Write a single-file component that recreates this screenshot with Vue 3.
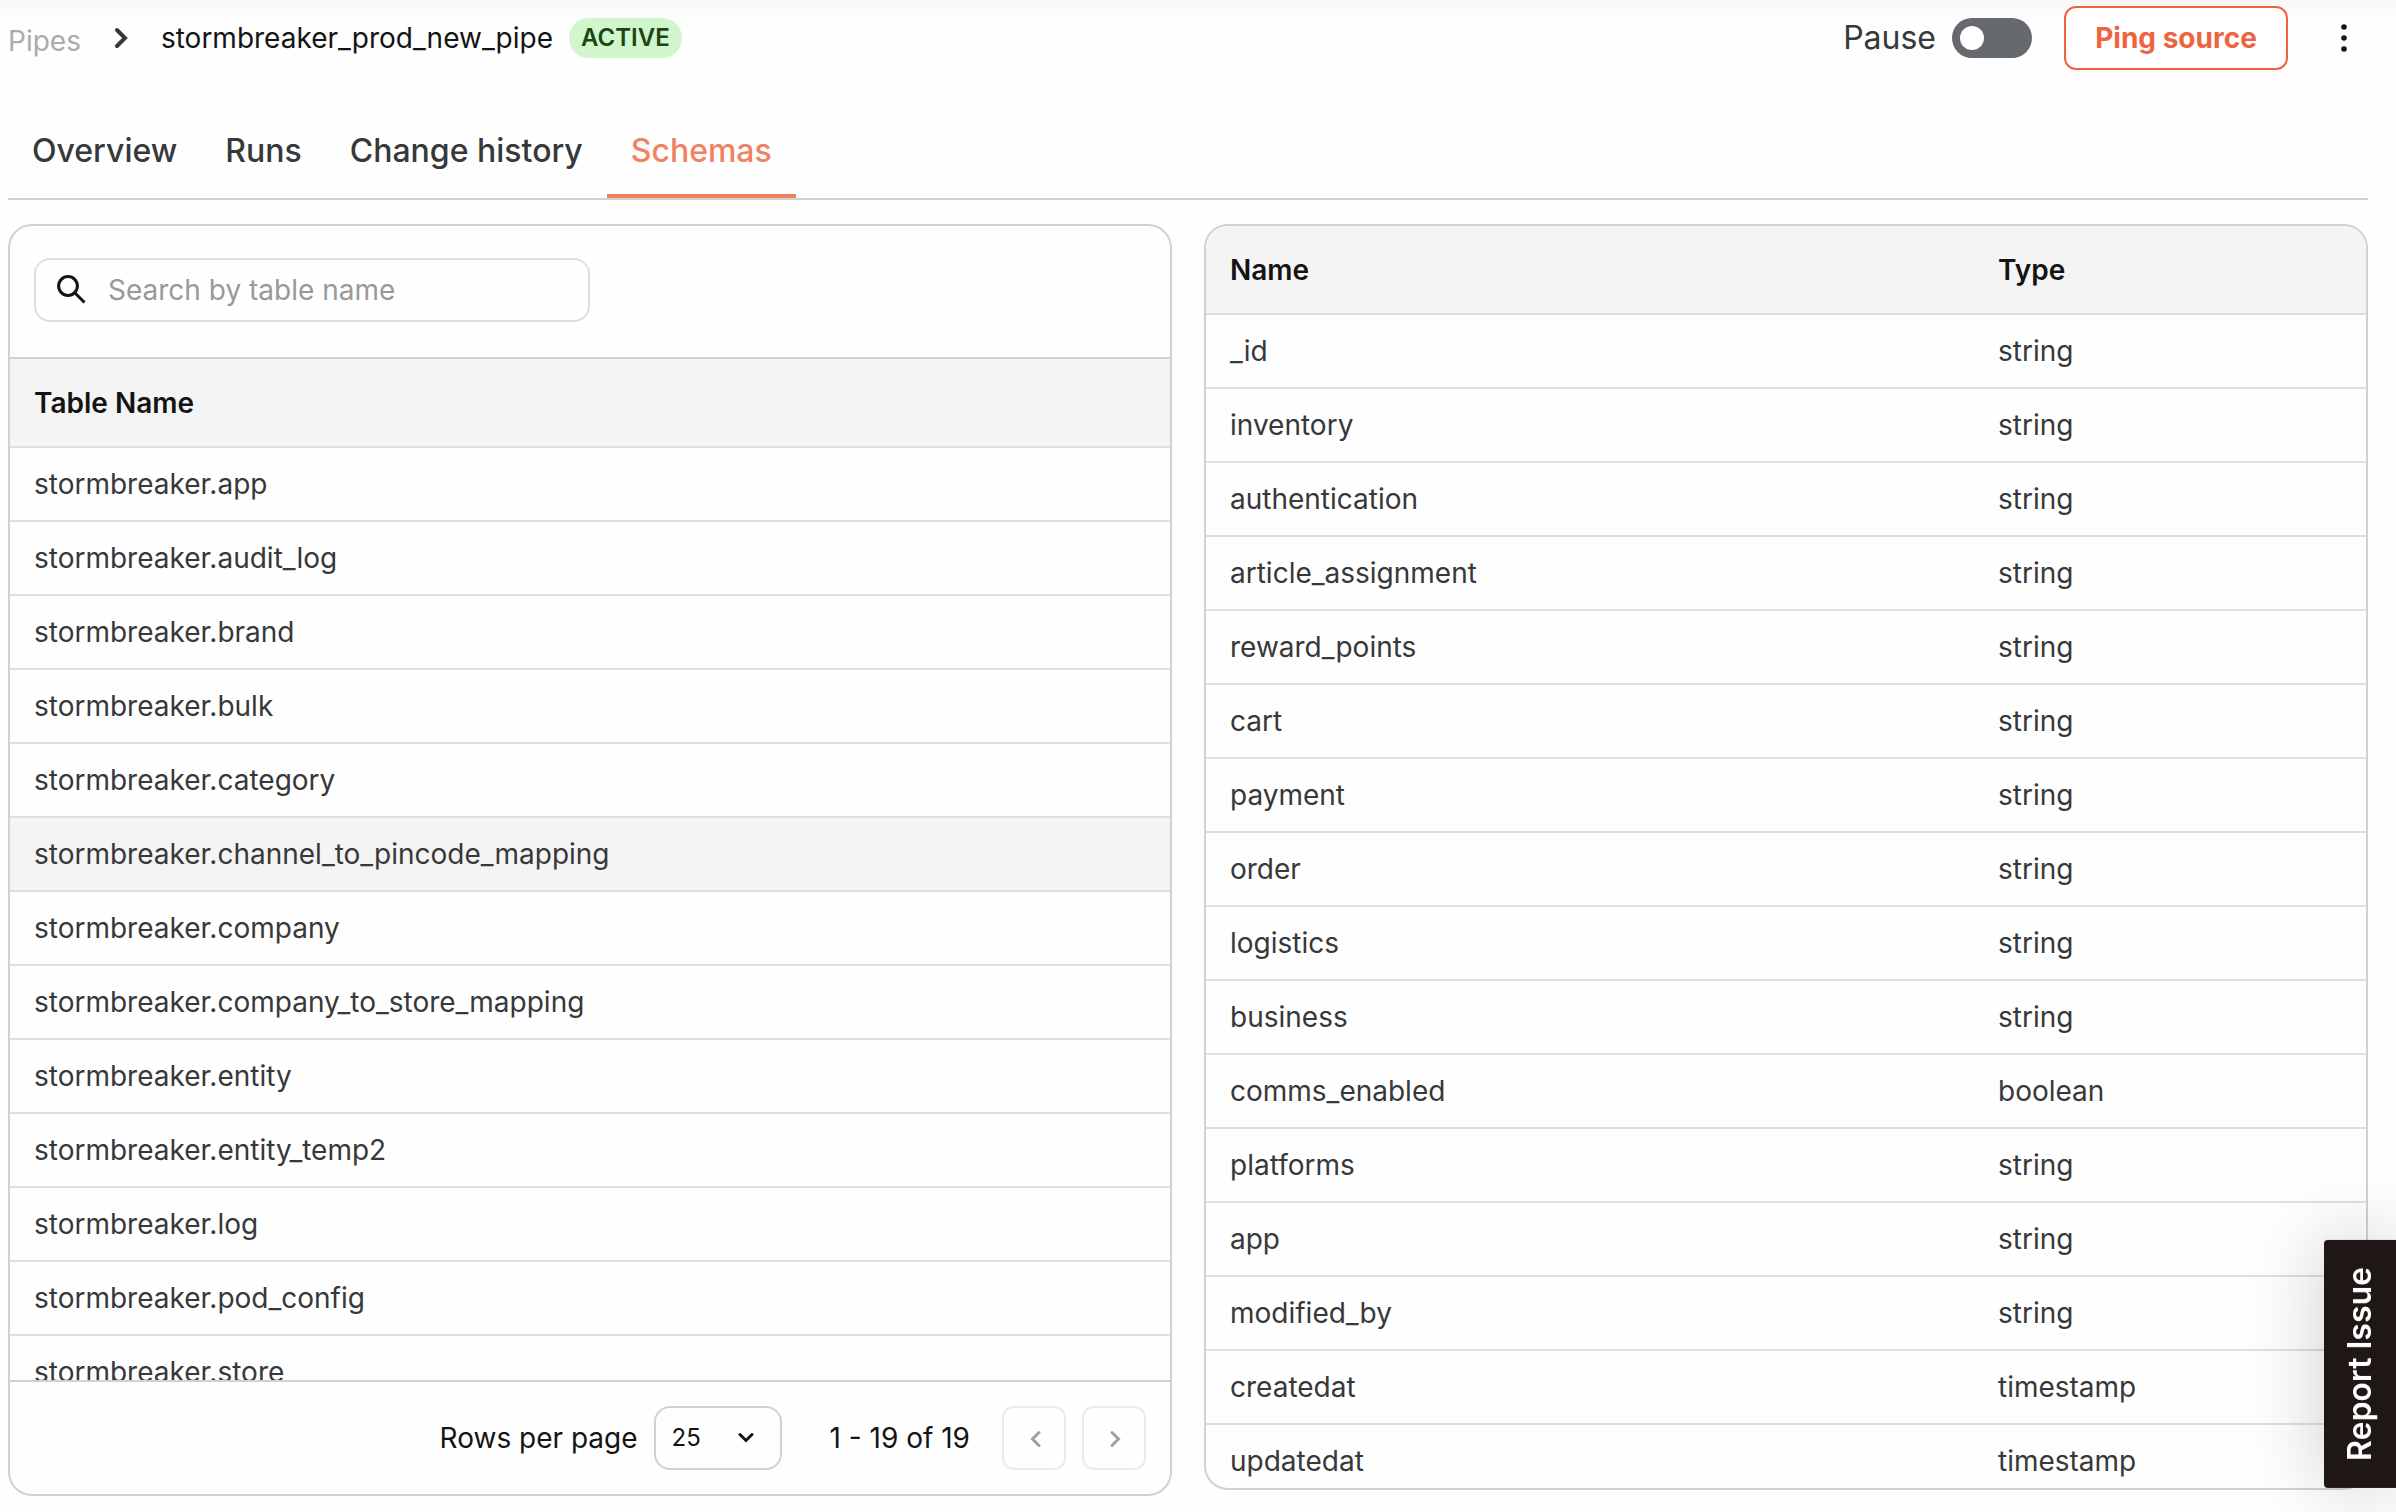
<script setup>
import { ref } from 'vue'

const tabs = ['Overview', 'Runs', 'Change history', 'Schemas']
const activeTab = ref('Schemas')
const paused = ref(false)
const search = ref('')
const pageSize = ref('25')
const selected = ref('channel_to_pincode_mapping')

const tables = [
  'app', 'audit_log', 'brand', 'bulk', 'category', 'channel_to_pincode_mapping',
  'company', 'company_to_store_mapping', 'entity', 'entity_temp2', 'log', 'pod_config', 'store',
]

const columns = [
  ['_id', 'string'],
  ['inventory', 'string'],
  ['authentication', 'string'],
  ['article_assignment', 'string'],
  ['reward_points', 'string'],
  ['cart', 'string'],
  ['payment', 'string'],
  ['order', 'string'],
  ['logistics', 'string'],
  ['business', 'string'],
  ['comms_enabled', 'boolean'],
  ['platforms', 'string'],
  ['app', 'string'],
  ['modified_by', 'string'],
  ['createdat', 'timestamp'],
  ['updatedat', 'timestamp'],
]
</script>

<template>
  <div class="page">
    <header class="topbar">
      <nav class="crumbs" aria-label="Breadcrumb">
        <a href="#" class="crumb">Pipes</a>
        <svg class="sep" viewBox="0 0 16 24" aria-hidden="true"><path d="M4 4l8 8-8 8" /></svg>
        <h1>stormbreaker_prod_new_pipe</h1>
        <span class="status">ACTIVE</span>
      </nav>
      <div class="actions">
        <label class="pause">
          <span>Pause</span>
          <input v-model="paused" type="checkbox" role="switch">
        </label>
        <button type="button" class="ping">Ping source</button>
        <button type="button" class="more" aria-label="More actions">
          <svg viewBox="0 0 8 32" aria-hidden="true">
            <circle cx="4" cy="5" r="2.8" /><circle cx="4" cy="16" r="2.8" /><circle cx="4" cy="27" r="2.8" />
          </svg>
        </button>
      </div>
    </header>

    <div class="tabs" role="tablist">
      <button
        v-for="tab in tabs"
        :key="tab"
        type="button"
        role="tab"
        class="tab"
        :class="{ active: tab === activeTab }"
        :aria-selected="tab === activeTab"
        @click="activeTab = tab"
      >{{ tab }}</button>
    </div>

    <main class="panels">
      <section class="panel tables">
        <div class="search-row">
          <label class="search">
            <svg viewBox="0 0 32 32" aria-hidden="true"><circle cx="12" cy="12" r="9.4" /><path d="M18.5 18.5l10 10" /></svg>
            <input v-model="search" type="text" placeholder="Search by table name" aria-label="Search by table name">
          </label>
        </div>
        <div class="scroll">
          <table>
            <thead>
              <tr><th scope="col">Table Name</th></tr>
            </thead>
            <tbody>
              <tr v-for="name in tables" :key="name" :class="{ selected: name === selected }" @click="selected = name">
                <td>stormbreaker.{{ name }}</td>
              </tr>
            </tbody>
          </table>
        </div>
        <footer class="pager">
          <label class="rows">
            <span>Rows per page</span>
            <span class="select">
              <select v-model="pageSize">
                <option>25</option>
                <option>50</option>
                <option>100</option>
              </select>
              <svg viewBox="0 0 16 12" aria-hidden="true"><path d="M2 2.5l6 6 6-6" /></svg>
            </span>
          </label>
          <span class="range">1 - 19 of 19</span>
          <div class="steps">
            <button type="button" disabled aria-label="Previous page">
              <svg viewBox="0 0 12 18" aria-hidden="true"><path d="M10 2.5L3.5 9l6.5 6.5" /></svg>
            </button>
            <button type="button" disabled aria-label="Next page">
              <svg viewBox="0 0 12 18" aria-hidden="true"><path d="M3 2.5L9.500 9 3 15.5" /></svg>
            </button>
          </div>
        </footer>
      </section>

      <section class="panel fields">
        <table>
          <thead>
            <tr><th scope="col">Name</th><th scope="col" class="type">Type</th></tr>
          </thead>
          <tbody>
            <tr v-for="[name, type] in columns" :key="name">
              <td>{{ name }}</td>
              <td>{{ type }}</td>
            </tr>
          </tbody>
        </table>
      </section>
    </main>

    <button type="button" class="report">Report Issue</button>
  </div>
</template>

<style>
html,
body {
  margin: 0;
  background: #fefefe;
}
</style>

<style scoped>
.page {
  box-sizing: border-box;
  height: 100vh;
  overflow: hidden;
  display: flex;
  flex-direction: column;
  padding: 6px 28px 16px 8px;
  font-family: Inter, "Liberation Sans", sans-serif;
  font-size: 28px;
  line-height: 40px;
  color: #141414;
  background: linear-gradient(#f8f8f8, #fefefe 24px);
}

*,
*::before {
  box-sizing: border-box;
}

button,
input,
select {
  margin: 0;
  font: inherit;
  color: inherit;
}

svg {
  display: block;
  flex: none;
  fill: none;
  stroke: currentColor;
  stroke-linecap: round;
}

.topbar {
  display: flex;
  align-items: center;
  justify-content: space-between;
  height: 64px;
}

.crumbs {
  display: flex;
  align-items: center;
}

.crumb {
  padding-top: 6px;
  color: #ababab;
  text-decoration: none;
}

.sep {
  width: 16px;
  height: 24px;
  margin: 0 32px;
  stroke: #373839;
  stroke-width: 4;
}

h1 {
  margin: 0;
  font-size: 28px;
  font-weight: 400;
}

.status {
  margin-left: 16px;
  padding: 0 12px;
  border-radius: 20px;
  background: #d1f6cb;
  color: #1c4714;
  font-size: 24px;
  font-weight: 600;
}

.actions {
  display: flex;
  align-items: center;
}

.pause {
  display: flex;
  align-items: center;
  gap: 16px;
  font-size: 32px;
  color: #373839;
}

.pause input {
  appearance: none;
  display: flex;
  align-items: center;
  width: 80px;
  height: 40px;
  padding: 0 8px;
  border-radius: 20px;
  background: #66696d;
}

.pause input::before {
  content: "";
  width: 24px;
  height: 24px;
  border-radius: 50%;
  background: #fff;
}

.pause input:checked::before {
  margin-left: auto;
}

.ping {
  width: 224px;
  height: 64px;
  margin-left: 32px;
  padding: 0;
  border: 2px solid #ee6440;
  border-radius: 12px;
  background: #fff;
  color: #ee6440;
  font-weight: 700;
}

.more {
  width: 48px;
  height: 48px;
  margin-left: 32px;
  padding: 0 20px;
  border: 0;
  background: none;
}

.more svg {
  width: 8px;
  height: 32px;
  fill: #141414;
  stroke: none;
}

.tabs {
  display: flex;
  flex: none;
  height: 92px;
  margin-top: 38px;
  border-bottom: 2px solid #d1d1d1;
}

.tab {
  padding: 0 24px;
  border: 0;
  border-bottom: 4px solid transparent;
  background: none;
  font-size: 32px;
  font-weight: 500;
  color: #373839;
}

.tab.active {
  border-color: #f08262;
  color: #f08262;
}

.panels {
  flex: 1;
  min-height: 0;
  display: grid;
  grid-template-columns: 1fr 1fr;
  gap: 32px;
  padding-top: 24px;
}

.panel {
  min-width: 0;
  min-height: 0;
  overflow: hidden;
  border: 2px solid #d1d1d1;
  border-radius: 24px;
  background: #fefefe;
}

.tables {
  display: flex;
  flex-direction: column;
}

.fields {
  margin-bottom: 6px;
}

.search-row {
  padding: 32px 24px 35px;
  border-bottom: 2px solid #d1d1d1;
}

.search {
  display: flex;
  align-items: center;
  gap: 20px;
  width: 556px;
  height: 64px;
  padding: 0 20px;
  border: 2px solid #dedede;
  border-radius: 16px;
}

.search svg {
  width: 32px;
  height: 32px;
  stroke-width: 3;
  stroke-linecap: butt;
}

.search input {
  flex: 1;
  min-width: 0;
  padding: 0;
  border: 0;
  outline: 0;
  background: none;
}

.search input::placeholder {
  color: #99999b;
  opacity: 1;
}

.scroll {
  flex: 1;
  min-height: 0;
  overflow: hidden;
}

table {
  width: 100%;
  table-layout: fixed;
  border-collapse: separate;
  border-spacing: 0;
}

th,
td {
  padding: 0 24px;
  border-bottom: 2px solid #dedede;
  text-align: left;
}

th {
  height: 89px;
  background: #f4f4f4;
  font-weight: 600;
}

td {
  height: 74px;
  color: #373839;
}

.type {
  width: 392px;
}

.selected td {
  background: #f4f4f4;
}

.pager {
  display: flex;
  align-items: center;
  justify-content: flex-end;
  flex: none;
  height: 114px;
  padding: 0 24px;
  border-top: 2px solid #d1d1d1;
}

.rows {
  display: flex;
  align-items: center;
  gap: 16px;
}

.select {
  position: relative;
}

.select select {
  appearance: none;
  display: block;
  width: 128px;
  height: 64px;
  padding: 0 16px;
  border: 2px solid #d1d1d1;
  border-radius: 16px;
  background: none;
  font-size: 24px;
}

.select svg {
  position: absolute;
  top: 26px;
  right: 28px;
  width: 16px;
  height: 12px;
  stroke-width: 3;
  pointer-events: none;
}

.range {
  margin: 0 32px 0 48px;
}

.steps {
  display: flex;
  gap: 16px;
}

.steps button {
  display: grid;
  place-items: center;
  width: 64px;
  height: 64px;
  padding: 2px 0 0 2px;
  border: 2px solid #ebebeb;
  border-radius: 12px;
  background: none;
  color: #a0a0a0;
}

.steps svg {
  width: 12px;
  height: 18px;
  stroke-width: 3;
}

.report {
  position: fixed;
  right: 0;
  bottom: 24px;
  width: 72px;
  height: 248px;
  padding: 0;
  border: 0;
  border-radius: 0 4px 4px 0;
  background: #1f1715;
  box-shadow: 0 0 80px rgba(0, 0, 0, 0.2);
  color: #fff;
  font-size: 32px;
  font-weight: 600;
  writing-mode: vertical-rl;
  transform: rotate(180deg);
}
</style>
